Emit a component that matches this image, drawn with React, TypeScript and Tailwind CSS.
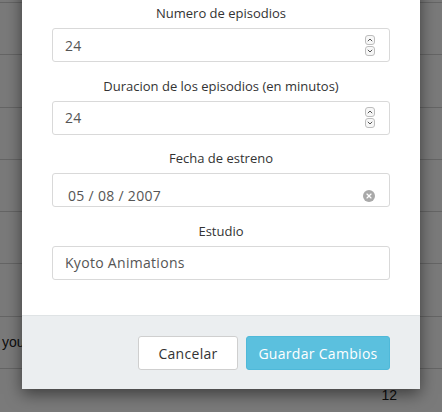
import { X } from "lucide-react";

const rows = Array.from({ length: 8 });

function Spinner() {
  return (
    <div className="flex flex-col gap-[1px]">
      <span className="flex h-[10px] w-[10px] items-center justify-center rounded-[3px] border border-[#bdbdbd] bg-[#f7f7f7]">
        <svg width="6" height="4" viewBox="0 0 6 4">
          <path d="M0.8 3.2 L3 1 L5.2 3.2" fill="none" stroke="#555" strokeWidth="1" />
        </svg>
      </span>
      <span className="flex h-[10px] w-[10px] items-center justify-center rounded-[3px] border border-[#bdbdbd] bg-[#f7f7f7]">
        <svg width="6" height="4" viewBox="0 0 6 4">
          <path d="M0.8 0.8 L3 3 L5.2 0.8" fill="none" stroke="#555" strokeWidth="1" />
        </svg>
      </span>
    </div>
  );
}

function Field({ label, children }: { label: string; children: React.ReactNode }) {
  return (
    <div className="flex flex-col">
      <label className="mb-[6px] h-[18px] text-center text-[13px] leading-[18px] text-[#333]">{label}</label>
      {children}
    </div>
  );
}

export default function App() {
  return (
    <div
      className="relative h-[412px] w-[442px] overflow-hidden bg-white"
      style={{ fontFamily: "'Open Sans', 'Liberation Sans', sans-serif" }}
    >
      {/* page behind the modal */}
      <div className="pt-[2px] font-['Liberation_Sans',sans-serif] text-[14px] text-[#222]">
        {rows.map((_, i) => (
          <div key={i} className="flex h-[52.3px] items-center justify-between border-t border-[#d4d4d4]">
            <span className="pl-[2px]">{i === 6 ? "you can edit this" : ""}</span>
            <span className="pr-[45px] pt-[2px]">{i === 7 ? "12" : ""}</span>
          </div>
        ))}
      </div>

      {/* backdrop */}
      <div className="absolute inset-0 bg-black/[0.52]" />

      {/* modal */}
      <div className="absolute left-[22px] top-[-20px] w-[398px] bg-white shadow-[0_5px_15px_rgba(0,0,0,0.5)]">
        <div className="flex flex-col gap-[14.5px] px-[30px] pb-[35.5px] pt-[24px]">
          <Field label="Numero de episodios">
            <div className="flex h-[34px] items-center justify-between rounded-[3px] border border-[#d9d9d9] pl-[12px] pr-[14px] text-[14px] tracking-[0.3px] text-[#555]">
              <span>24</span>
              <Spinner />
            </div>
          </Field>
          <Field label="Duracion de los episodios (en minutos)">
            <div className="flex h-[34px] items-center justify-between rounded-[3px] border border-[#d9d9d9] pl-[12px] pr-[14px] text-[14px] tracking-[0.3px] text-[#555]">
              <span>24</span>
              <Spinner />
            </div>
          </Field>
          <Field label="Fecha de estreno">
            <div className="flex h-[34px] items-end justify-between rounded-[3px] border border-[#d9d9d9] pl-[15px] pr-[14px] text-[14px] tracking-[0.3px] text-[#555]">
              <span className="leading-[20px]">05 / 08 / 2007</span>
              <span className="mb-[4px] flex h-[12px] w-[12px] items-center justify-center rounded-full bg-[#a9a9a9]">
                <X size={8} strokeWidth={3.5} color="#fff" />
              </span>
            </div>
          </Field>
          <Field label="Estudio">
            <div className="flex h-[34px] items-center rounded-[3px] border border-[#d9d9d9] pl-[12px] text-[14px] tracking-[0.3px] text-[#555]">
              Kyoto Animations
            </div>
          </Field>
        </div>
        <div className="flex justify-end gap-[8px] border-t border-[#dfe3e5] bg-[#ebeef0] px-[30px] pb-[19px] pt-[20px]">
          <button className="h-[34px] w-[100px] rounded-[3px] border border-[#cfcfcf] bg-white text-[14px] tracking-[0.3px] text-[#333]">
            Cancelar
          </button>
          <button className="h-[34px] w-[144px] rounded-[3px] border border-[#4fb9d9] bg-[#5bc0de] text-[14px] tracking-[0.3px] text-white">
            Guardar Cambios
          </button>
        </div>
      </div>
    </div>
  );
}
